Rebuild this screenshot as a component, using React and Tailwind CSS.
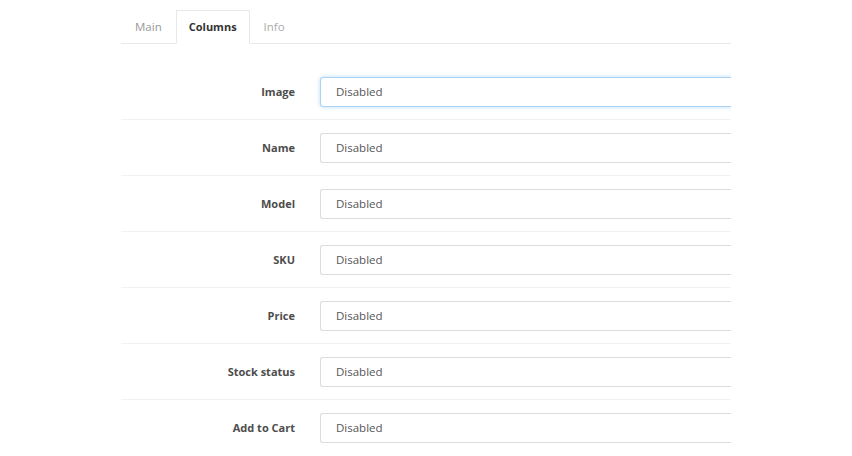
const ROWS = ["Image", "Name", "Model", "SKU", "Price", "Stock status", "Add to Cart"];

const Tabs = () => (
  <div className="flex border-b border-[#e8e8e8] leading-[18px]">
    <div className="px-[13px] pt-[7px] pb-[6px] mt-[10px] text-[11.5px] text-[#999] border border-transparent">Main</div>
    <div className="px-[12px] pt-[7px] pb-[6px] mt-[10px] text-[11px] font-bold text-[#333] bg-white border border-[#e8e8e8] border-b-white -mb-px">
      Columns
    </div>
    <div className="px-[13px] pt-[7px] pb-[6px] mt-[10px] text-[11.5px] text-[#aaa] border border-transparent">Info</div>
  </div>
);

const Row = ({ label, focused, last }) => (
  <div className={"flex items-center pt-[13px] " + (last ? "pb-[13px]" : "pb-[12px] border-b border-[#f2f2f2]")}>
    <label className="w-[199px] shrink-0 pr-[25px] text-right font-bold text-[11px] text-[#4d4d4d]">
      {label}
    </label>
    <div
      className={
        "flex-1 h-[30px] flex items-center pl-[15px] text-[11.5px] text-[#555] rounded-l-[3px] border border-r-0 " +
        (focused
          ? "border-[#a9d3f2] shadow-[0_0_4px_rgba(102,175,233,0.45)]"
          : "border-[#dcdcdc]")
      }
    >
      Disabled
    </div>
  </div>
);

export default function App() {
  return (
    <div className="w-[852px] h-[456px] bg-white overflow-hidden" style={{ fontFamily: '"Open Sans", sans-serif' }}>
      <div className="ml-[121px] w-[610px] overflow-hidden">
        <Tabs />
        <div className="pt-[20px]">
          {ROWS.map((r, i) => (
            <Row key={r} label={r} focused={i === 0} last={i === ROWS.length - 1} />
          ))}
        </div>
      </div>
    </div>
  );
}
